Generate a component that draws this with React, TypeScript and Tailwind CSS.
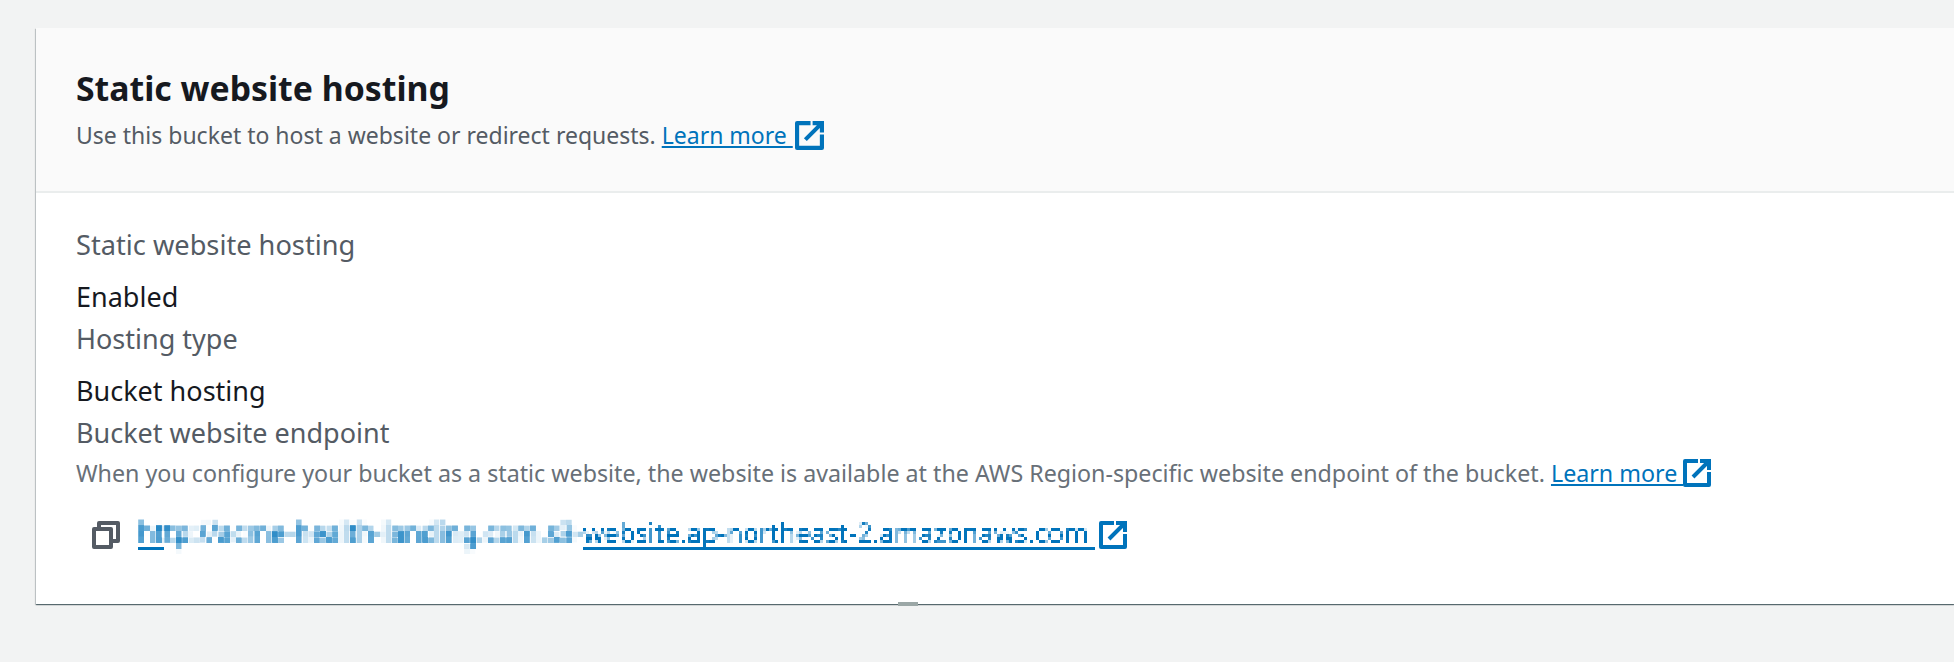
function ExternalIcon({ className }: { className: string }) {
  return (
    <svg viewBox="0 0 28 28" className={className} fill="none" stroke="currentColor" strokeWidth="4">
      <path d="M15 2H2v24h24V13" strokeLinejoin="round" />
      <path d="M10 18 24 4M17 2h9v9" />
    </svg>
  );
}

function CopyIcon() {
  return (
    <svg viewBox="0 0 28 28" className="h-7 w-7 text-[#545b64]" fill="none" stroke="currentColor" strokeWidth="4">
      <path d="M2 8h17v18H2z" strokeLinejoin="round" />
      <path d="M7 8V2h19v18h-7" strokeLinejoin="round" />
    </svg>
  );
}

// the url is pixelated in the screenshot, so the real text goes through these
function MosaicFilters() {
  return (
    <svg className="absolute h-0 w-0">
      <filter id="mosaic" x="0" y="-0.2" width="1" height="1.4" colorInterpolationFilters="sRGB">
        <feGaussianBlur stdDeviation="1" result="soft" />
        <feFlood x="2" y="2" width="2" height="2" />
        <feComposite width="6" height="6" />
        <feTile result="grid" />
        <feComposite in="soft" in2="grid" operator="in" />
        <feMorphology operator="dilate" radius="2" />
      </filter>
      <filter id="mosaic-fine" x="0" y="-0.2" width="1" height="1.4" colorInterpolationFilters="sRGB">
        <feGaussianBlur stdDeviation="0.7" result="soft" />
        <feFlood x="1" y="1" width="1" height="1" />
        <feComposite width="3" height="3" />
        <feTile result="grid" />
        <feComposite in="soft" in2="grid" operator="in" />
        <feMorphology operator="dilate" radius="1" />
      </filter>
    </svg>
  );
}

export default function App() {
  return (
    <div className="h-[662px] overflow-hidden bg-[#f2f3f3] pt-7 pl-9 font-['Noto_Sans',sans-serif]">
      <MosaicFilters />
      <section className="relative h-[576px] bg-white shadow-[0_1px_1px_0_rgba(0,28,36,0.5),1px_1px_1px_0_rgba(0,28,36,0.15),-1px_1px_1px_0_rgba(0,28,36,0.15)]">
        <header className="h-[165px] border-b-2 border-[#eaeded] bg-[#fafafa] pt-[37px] pl-10">
          <h2 className="text-[33.8px] leading-[46px] font-bold text-[#16191f]">Static website hosting</h2>
          <p className="mt-[8px] flex items-center text-[23px] leading-8 text-[#545b64]">
            Use this bucket to host a website or redirect requests.&nbsp;
            <a className="text-[#0073bb] underline">Learn more&nbsp;</a>
            <ExternalIcon className="ml-[2px] h-[29px] w-[29px] text-[#0073bb]" />
          </p>
        </header>
        <div className="pt-[34px] pl-10 text-[27px] leading-9">
          <div className="text-[27.2px] text-[#545b64]">Static website hosting</div>
          <div className="mt-[16px] text-[#16191f]">Enabled</div>
          <div className="mt-[6px] text-[#545b64]">Hosting type</div>
          <div className="mt-[16px] text-[#16191f]">Bucket hosting</div>
          <div className="mt-[6px] text-[#545b64]">Bucket website endpoint</div>
          <p className="mt-[6px] flex items-center text-[23.24px] leading-8 text-[#687078]">
            When you configure your bucket as a static website, the website is available at the AWS Region-specific website endpoint of the bucket.&nbsp;
            <a className="text-[#0073bb] underline">Learn more&nbsp;</a>
            <ExternalIcon className="h-7 w-7 text-[#0073bb]" />
          </p>
          <div className="mt-[30px] flex items-center pl-4 leading-7 text-[#0073bb]">
            <CopyIcon />
            <a className="ml-[18px] flex">
              <span className="border-b-[3px] border-[#0073bb]">
                <span className="block [filter:url(#mosaic)]">ht</span>
              </span>
              <span className="border-b-[3px] border-transparent">
                <span className="block text-[26.8px] [filter:url(#mosaic)]">tp://acme-health-landing.com.s3-</span>
              </span>
              <span className="border-b-[3px] border-[#0073bb] whitespace-pre">
                <span className="block text-[26.6px] [filter:url(#mosaic-fine)]">website.ap-northeast-2.amazonaws.com </span>
              </span>
            </a>
            <ExternalIcon className="ml-1 h-7 w-7" />
          </div>
        </div>
        <div className="absolute -bottom-0.5 left-[862px] h-1 w-5 bg-[#9ba7a6]" />
      </section>
    </div>
  );
}
